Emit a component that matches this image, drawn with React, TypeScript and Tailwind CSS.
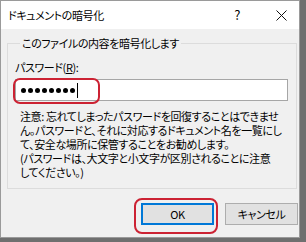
export default function App() {
  const dots = Array.from({ length: 8 });

  return (
    <div className="w-[306px] h-[242px] bg-[#6f6f6f] pr-[6px] pb-[4px] font-['Noto_Sans_CJK_JP',sans-serif] [font-feature-settings:'palt'] text-black">
      <div className="relative w-[300px] h-[238px] flex flex-col border border-[#9a9a9a] bg-[#f0f0f0]">
        {/* タイトルバー */}
        <div className="flex items-center h-[28px] bg-white pl-[7px] text-[11px] tracking-[-0.4px]">
          <span>ドキュメントの暗号化</span>
          <span className="ml-auto mr-[36px] text-[13px]">?</span>
          <svg width="11" height="11" viewBox="0 0 11 11" className="mr-[12px]">
            <path d="M0.5 0.5 L10.5 10.5 M10.5 0.5 L0.5 10.5" stroke="#111" strokeWidth="1" />
          </svg>
        </div>

        {/* グループボックス */}
        <fieldset className="mt-[6px] ml-[6px] mr-[2px] border border-[#dcdcdc] pl-[7px] pr-[8px] pb-[9px] text-[11px] tracking-[-0.4px]">
          <legend className="ml-[5px] px-[2px] leading-[16px]">このファイルの内容を暗号化します</legend>
          <div className="mt-[8px] leading-[16px]">
            パスワード(<span className="underline">R</span>):
          </div>
          <div className="mt-[4px] h-[22px] flex items-center border border-[#a6a6a6] bg-white pl-[5px]">
            <div className="flex gap-[2px]">
              {dots.map((_, i) => (
                <span key={i} className="w-[5px] h-[5px] rounded-full bg-black" />
              ))}
            </div>
            <span className="ml-[2px] w-[1px] h-[15px] bg-black" />
          </div>
          <div className="mt-[8px] ml-[5px] leading-[14px] whitespace-nowrap">
            <div>注意: 忘れてしまったパスワードを回復することはできませ</div>
            <div>ん。パスワードと、それに対応するドキュメント名を一覧にし</div>
            <div>て、安全な場所に保管することをお勧めします。</div>
            <div>(パスワードは、大文字と小文字が区別されることに注意</div>
            <div>してください。)</div>
          </div>
        </fieldset>

        {/* ボタン */}
        <div className="mt-[14px] flex justify-end gap-[11px] pr-[1px] text-[11px] tracking-[-0.4px]">
          <button className="w-[73px] h-[22px] bg-[#e1e1e1] border-2 border-[#0078d7]">OK</button>
          <button className="w-[73px] h-[22px] bg-[#e1e1e1] border border-[#adadad]">キャンセル</button>
        </div>

        {/* 赤い囲み */}
        <div className="absolute left-[12px] top-[77px] w-[87px] h-[26px] border-2 border-[#cc2233] rounded-[7px]" />
        <div className="absolute left-[133px] top-[197px] w-[84px] h-[36px] border-2 border-[#cc2233] rounded-[8px]" />
      </div>
    </div>
  );
}
